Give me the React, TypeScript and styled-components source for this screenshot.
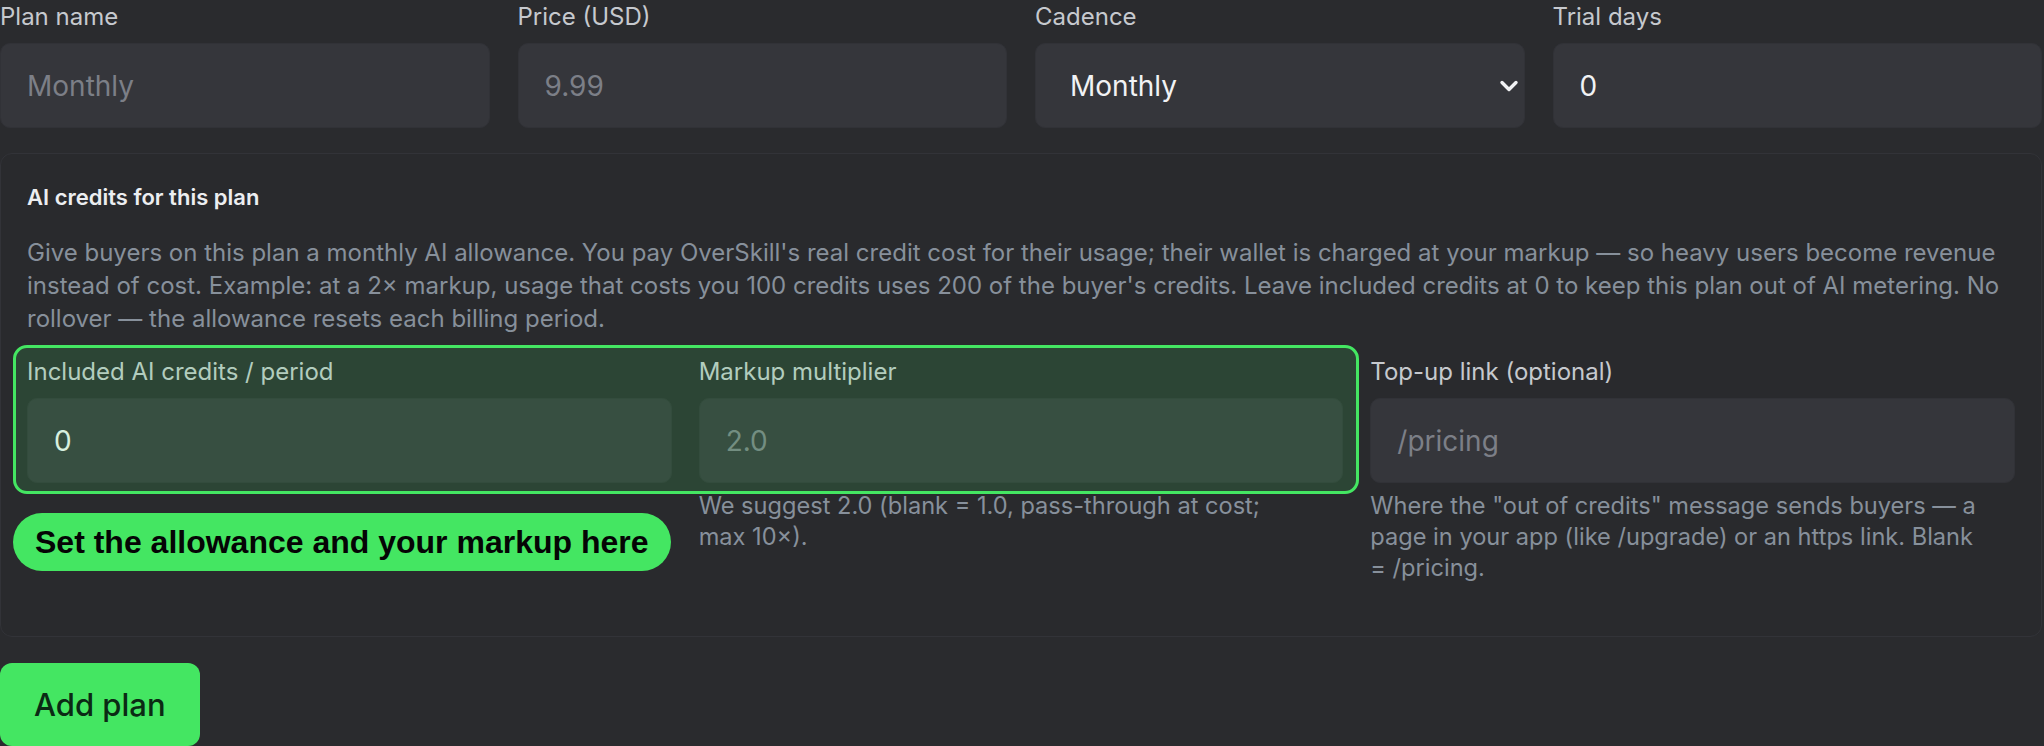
import styled, { createGlobalStyle } from "styled-components";

const GlobalStyle = createGlobalStyle`
  html, body {
    margin: 0;
    padding: 0;
    background: #2a2b2e;
  }
  body {
    font-family: Inter, "Noto Sans", sans-serif;
    color: #e9eaed;
  }
  * {
    box-sizing: border-box;
  }
`;

const green = "#44e662";

const Page = styled.div`
  width: 2042px;
  display: flex;
  flex-direction: column;
`;

const TopGrid = styled.div`
  display: grid;
  grid-template-columns: repeat(4, 1fr);
  column-gap: 28px;
`;

const Field = styled.div`
  display: flex;
  flex-direction: column;
  min-width: 0;
`;

const Label = styled.label`
  font-size: 24px;
  line-height: 33px;
  font-weight: 400;
  color: #c6c9ce;
  margin-bottom: 10px;
  white-space: nowrap;
`;

const Input = styled.input`
  width: 100%;
  height: 85px;
  padding: 0 26px;
  border: 1px solid #313237;
  border-radius: 10px;
  background: #35363b;
  color: #f1f2f4;
  font: inherit;
  font-size: 28px;
  outline: none;

  &::placeholder {
    color: #7c7f87;
  }
`;

const SelectWrap = styled.div`
  position: relative;
`;

const Select = styled.select`
  width: 100%;
  height: 85px;
  padding: 0 34px;
  border: 1px solid #313237;
  border-radius: 10px;
  background: #35363b;
  color: #f1f2f4;
  font: inherit;
  font-size: 28px;
  appearance: none;
  outline: none;
`;

const Chevron = styled.svg`
  position: absolute;
  right: 5px;
  top: 50%;
  transform: translateY(-50%);
  pointer-events: none;
`;

const Card = styled.section`
  margin-top: 25px;
  border: 1px solid #323338;
  border-radius: 12px;
  background: #292a2d;
  padding: 28px 26px 53px;
`;

const Title = styled.h3`
  margin: 0;
  font-size: 22px;
  line-height: 30px;
  font-weight: 600;
  color: #eceef1;
`;

const Description = styled.p`
  margin: 24px 0 0;
  font-size: 24px;
  line-height: 33px;
  color: #87909b;
`;

const FieldGrid = styled.div`
  position: relative;
  margin-top: 20px;
  display: grid;
  grid-template-columns: repeat(3, 1fr);
  column-gap: 27px;
`;

const Help = styled.p<{ $max: number }>`
  margin: 7px 0 0;
  max-width: ${(p) => p.$max}px;
  font-size: 23.6px;
  line-height: 31px;
  color: #87909b;
`;

const Highlight = styled.div`
  position: absolute;
  grid-column: 1 / 3;
  grid-row: 1;
  top: -10px;
  left: -14px;
  right: -16px;
  height: 149px;
  border: 3px solid ${green};
  border-radius: 14px;
  background: rgba(68, 230, 98, 0.15);
  pointer-events: none;
`;

const Callout = styled.div`
  align-self: flex-start;
  margin: 30px 0 0 -14px;
  height: 58px;
  padding: 0 22px;
  display: flex;
  align-items: center;
  border-radius: 29px;
  background: ${green};
  color: #050505;
  font-family: "Liberation Sans", Arial, sans-serif;
  font-weight: 700;
  font-size: 32px;
  white-space: nowrap;
`;

const AddButton = styled.button`
  align-self: flex-start;
  margin-top: 26px;
  height: 83px;
  padding: 0 34px;
  border: none;
  border-radius: 12px;
  background: ${green};
  color: #0b2a14;
  font: inherit;
  font-size: 31px;
  font-weight: 500;
  cursor: pointer;
`;

export default function App() {
  return (
    <Page>
      <GlobalStyle />
      <TopGrid>
        <Field>
          <Label>Plan name</Label>
          <Input placeholder="Monthly" />
        </Field>
        <Field>
          <Label>Price (USD)</Label>
          <Input placeholder="9.99" />
        </Field>
        <Field>
          <Label>Cadence</Label>
          <SelectWrap>
            <Select defaultValue="monthly">
              <option value="monthly">Monthly</option>
              <option value="yearly">Yearly</option>
            </Select>
            <Chevron width="22" height="14" viewBox="0 0 22 14">
              <polyline points="4,3.5 11,10.5 18,3.5" fill="none" stroke="#f1f2f4" strokeWidth="3.4" strokeLinecap="round" strokeLinejoin="round" />
            </Chevron>
          </SelectWrap>
        </Field>
        <Field>
          <Label>Trial days</Label>
          <Input defaultValue="0" />
        </Field>
      </TopGrid>

      <Card>
        <Title>AI credits for this plan</Title>
        <Description>
          Give buyers on this plan a monthly AI allowance. You pay OverSkill's real credit cost for their usage; their
          wallet is charged at your markup — so heavy users become revenue instead of cost. Example: at a 2× markup,
          usage that costs you 100 credits uses 200 of the buyer's credits. Leave included credits at 0 to keep this
          plan out of AI metering. No rollover — the allowance resets each billing period.
        </Description>

        <FieldGrid>
          <Field>
            <Label>Included AI credits / period</Label>
            <Input defaultValue="0" />
            <Callout>Set the allowance and your markup here</Callout>
          </Field>
          <Field>
            <Label>Markup multiplier</Label>
            <Input placeholder="2.0" />
            <Help $max={585}>We suggest 2.0 (blank = 1.0, pass-through at cost; max 10×).</Help>
          </Field>
          <Field>
            <Label>Top-up link (optional)</Label>
            <Input placeholder="/pricing" />
            <Help $max={612}>
              Where the "out of credits" message sends buyers — a page in your app (like /upgrade) or an https link.
              Blank = /pricing.
            </Help>
          </Field>
          <Highlight />
        </FieldGrid>
      </Card>

      <AddButton>Add plan</AddButton>
    </Page>
  );
}
